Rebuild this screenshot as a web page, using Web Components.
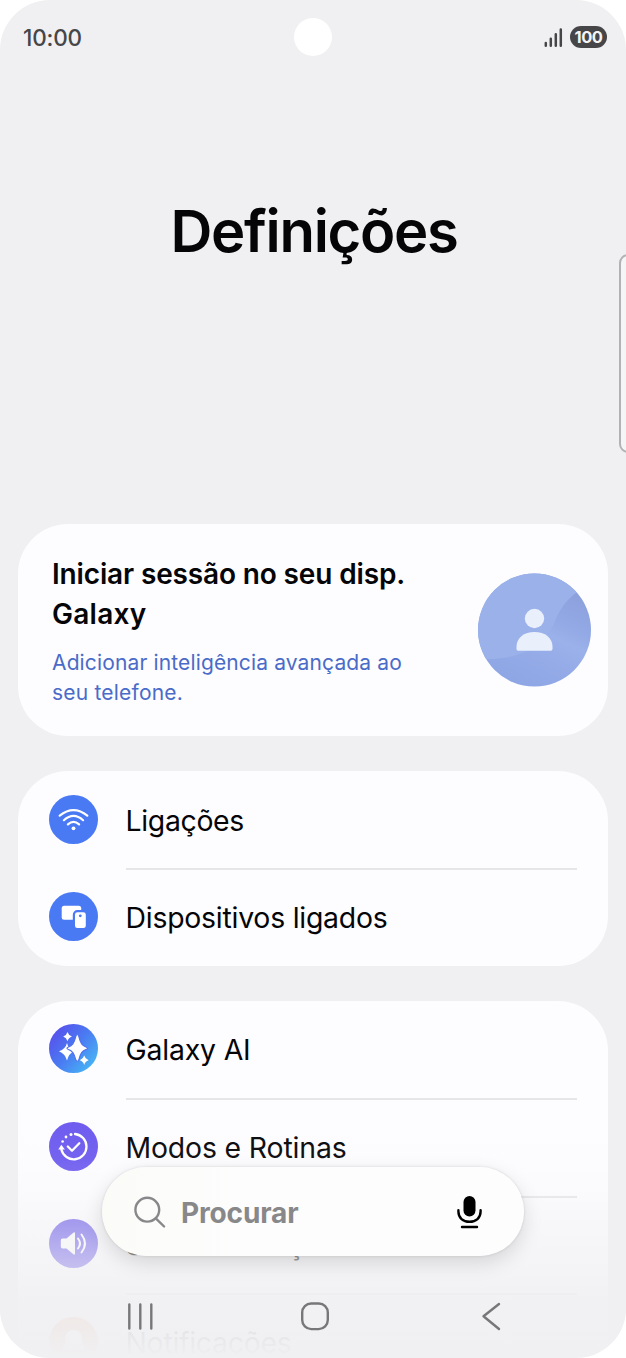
<!DOCTYPE html>
<html lang="pt">
<head>
<meta charset="utf-8">
<title>Definições</title>
<style>
html,body{margin:0;background:#fff;font-family:Inter,Roboto,sans-serif}
</style>
</head>
<body>
<settings-screen></settings-screen>
<script>
function define(name, markup, setup) {
  const tpl = document.createElement('template');
  tpl.innerHTML = markup;
  customElements.define(name, class extends HTMLElement {
    connectedCallback() {
      if (this.shadowRoot) return;
      this.attachShadow({mode: 'open'}).append(tpl.content.cloneNode(true));
      if (setup) setup.call(this, this.shadowRoot);
    }
  });
}

// One line of text, tracked so that its advance equals the "w" attribute.
define('fit-text', `<style>:host{display:block;white-space:nowrap}span{display:inline-block}</style><span><slot></slot></span>`,
function (root) {
  const s = root.querySelector('span'), n = this.textContent.length, w = +this.getAttribute('w');
  s.style.letterSpacing = (w - s.getBoundingClientRect().width) / n + 'px';
});

define('status-bar', `<style>
:host{display:grid;grid-template-columns:1fr 38px 1fr;align-items:center;height:75px;box-sizing:border-box;padding:0 19px 2px 23px;color:#464648}
.cam{width:38px;height:38px;border-radius:50%;background:#fff;margin-left:-2px}
.t{font-size:22.5px;font-weight:550;line-height:30px;padding-top:3px}
.r{display:flex;justify-content:flex-end;align-items:center;gap:7px;padding-top:1px}
.b{width:37px;height:22px;border-radius:11px;background:#464648;color:#f4f4f5;font-size:16.5px;font-weight:650;line-height:22px;display:flex;justify-content:center}
svg{display:block}
</style>
<fit-text class="t" w="59">10:00</fit-text><div class="cam"></div>
<div class="r"><svg width="19" height="22" viewBox="0 0 19 22" stroke="#464648" stroke-width="2.5" stroke-linecap="round"><path d="M1.8 17v2.700M6.800 12.700v7M11.800 8.200v11.500M16.800 3.600v16.100"/></svg>
<div class="b"><fit-text w="28">100</fit-text></div></div>`);

define('page-title', `<style>
:host{display:flex;justify-content:center;height:449px;box-sizing:border-box;padding:116px 0 0 2px;color:#050507;font-size:58px;font-weight:570;line-height:81px}
</style><slot></slot>`);

define('account-card', `<style>
:host{display:flex;justify-content:space-between;box-sizing:border-box;height:212px;margin:0 18px;padding:31px 17px 0 34px;border-radius:50px;background:#fdfdff}
.h{font-size:28px;font-weight:570;line-height:39.5px;color:#050507}
.s{font-size:21px;line-height:30px;color:#4a6bc8;padding-top:14px}
svg{display:block;margin-top:18px}
</style>
<div><div class="h"><fit-text w="353">Iniciar sessão no seu disp.</fit-text><fit-text w="94.500">Galaxy</fit-text></div>
<div class="s"><fit-text w="350">Adicionar inteligência avançada ao</fit-text><fit-text w="131">seu telefone.</fit-text></div></div>
<svg width="113" height="114" viewBox="0 0 113 114">
<defs><clipPath id="c"><circle cx="56.5" cy="57" r="56.5"/></clipPath>
<linearGradient id="g" x1=".3" y1="1" x2=".75" y2="0"><stop offset="0" stop-color="#8ea5e5"/><stop offset=".3" stop-color="#94abe8"/><stop offset=".5" stop-color="#9ab1ea"/><stop offset=".62" stop-color="#93aae6"/><stop offset=".9" stop-color="#8ca0dc"/></linearGradient></defs>
<g clip-path="url(#c)"><path fill="url(#g)" d="M0 0h113v114H0z"/><path fill="#9ab1ea" d="M0 0h113v12Q86 22 76 51Q62 77 38 82Q24 87 0 86z"/></g>
<g fill="#e9effb"><circle cx="56.5" cy="45.5" r="9.7"/><path d="M38.5 76v-2.5C38.5 65 46 59 56.5 59s18 6 18 14.500V76q0 1.700-1.700 1.700H40.200q-1.700 0-1.700-1.700z"/></g></svg>`);

define('settings-group', `<style>
:host{display:block;box-sizing:border-box;margin:35px 18px 0;border-radius:50px;background:#fdfdff}
</style><slot></slot>`);

define('settings-row', `<style>
:host{display:flex;align-items:center;box-sizing:border-box;height:97.400px;padding:0 31px 0 30.500px;gap:28px;color:#050507;font-size:28.400px}
.i{width:49px;height:49px;flex:none;margin-top:-1px}
.l{flex:1;height:100%;display:flex;align-items:center;box-sizing:border-box;padding-top:1px;box-shadow:0 2px #e6e6e9}
:host([last]) .l{box-shadow:none}
</style><div class="i"><slot name="icon"></slot></div><div class="l"><slot></slot></div>`);

const icons = {
  wifi: `<circle cx="24.500" cy="24.500" r="24.500" fill="#4a79f4"/><g fill="none" stroke="#fff" stroke-width="2.200" stroke-linecap="round"><path d="M10.700 20.700Q24.500 9.600 38.300 20.700M14.900 25.200Q24.500 16.600 34.100 25.200M18.900 29.400Q24.500 24.300 30.100 29.400"/></g><circle cx="24.500" cy="33.300" r="1.900" fill="#fff"/>`,
  devices: `<circle cx="24.500" cy="24.500" r="24.500" fill="#4a79f4"/><rect x="12.700" y="13.800" width="19.500" height="14" rx="2.500" fill="#fff"/><rect x="24.900" y="19.200" width="13" height="18" rx="3.500" fill="#fff" stroke="#4a79f4" stroke-width="2.200"/><circle cx="31.300" cy="23.800" r="1.400" fill="#4a79f4"/>`,
  ai: `<defs><linearGradient id="a" x1=".1" y1=".15" x2=".9" y2=".85"><stop offset="0" stop-color="#5752ec"/><stop offset=".5" stop-color="#4a7bf2"/><stop offset="1" stop-color="#47b4f5"/></linearGradient></defs><circle cx="24.500" cy="24.500" r="24.500" fill="url(#a)"/><g fill="#fff"><path d="M18 19Q19.300 25 25 27.300Q19.800 29.500 18 36.500Q15.800 29.500 10 27.300Q16.500 25 18 19z"/><path stroke="#4f70ef" stroke-width="1.100" d="M28.300 10.500Q29.300 10.500 29.800 12.500C31.600 19.500 33 21.500 37.500 23.200Q39.500 24.200 37.500 25.200C33 27 31.600 29 29.800 35.800Q28.300 38.800 26.800 35.800C25 29 23.500 27 19 25.200Q17 24.200 19 23.200C23.500 21.500 25 19.500 26.800 12.500Q27.300 10.500 28.300 10.500z"/><path d="M18.500 8Q19.500 11.500 23 12.600Q19.500 13.700 18.500 17.300Q17.500 13.700 14.200 12.600Q17.500 11.500 18.500 8zM35.200 31.500Q36.200 35 39.600 36.200Q36.200 37.300 35.200 41Q34.200 37.300 30.800 36.200Q34.200 35 35.200 31.500z"/></g>`,
  modes: `<circle cx="24.500" cy="24.500" r="24.500" fill="#6c59ef"/><g fill="none" stroke="#fff" stroke-width="2.300" stroke-linecap="round" stroke-linejoin="round"><path d="M26 12A12.700 12.700 0 1 1 12.400 27.500M18.800 24.500l4.200 4.300 7.300-7.500"/></g><g fill="#fff"><circle cx="22" cy="12.400" r="1.500"/><circle cx="17" cy="15" r="1.400"/><circle cx="13.600" cy="19.500" r="1.300"/><path d="M9.300 27.600L12.300 22.800L15.900 27.400z"/></g>`,
  sound: `<circle cx="24.500" cy="24.500" r="24.500" fill="#6a59ea"/><path fill="#fff" d="M13.500 19.500h4l6.800-5.700q1.700-1.200 1.700.7v20q0 1.900-1.700.7l-6.800-5.700h-4q-1.700 0-1.700-1.700V21.200q0-1.700 1.700-1.700z"/><g fill="none" stroke="#fff" stroke-width="2" stroke-linecap="round"><path d="M29 19.500q4 5 0 10M32.500 15.500q7 9 0 18"/></g>`,
  bell: `<circle cx="24.500" cy="24.500" r="24.500" fill="#f08c64"/><path fill="#fff" d="M24.500 13c-6 0-8.500 4-8.500 9v5l-3 6h23l-3-6v-5c0-5-2.500-9-8.500-9z"/>`
};
customElements.define('row-icon', class extends HTMLElement {
  connectedCallback() {
    if (this.shadowRoot) return;
    this.attachShadow({mode: 'open'}).innerHTML = `<style>:host,svg{display:block;width:49px;height:49px}</style><svg viewBox="0 0 49 49">${icons[this.getAttribute('name')]}</svg>`;
  }
});

define('search-pill', `<style>
:host{display:flex;align-items:center;box-sizing:border-box;width:422px;height:89px;padding:2px 41px 0 31px;border-radius:45px;background:linear-gradient(90deg,#fbfcf8,#fcfcfb 20%,#fdfdfd 36%);box-shadow:0 0 3px rgba(0,0,0,.13),0 7px 20px rgba(0,0,0,.13);color:#88888a;font-size:28px;font-weight:670}
.q{flex:1;margin-left:15px}svg{display:block}
</style>
<svg width="33" height="33" viewBox="0 0 33 33" fill="none" stroke="#88888a" stroke-width="2.400" stroke-linecap="round"><circle cx="14.300" cy="13.700" r="11.900"/><path d="M22.800 22.300l8.300 8.200"/></svg>
<fit-text class="q" w="117.500">Procurar</fit-text>
<svg width="28" height="36" viewBox="0 0 28 36"><rect x="8.500" y="1" width="12" height="20.500" rx="6"/><path fill="none" stroke="#000" stroke-width="2.400" stroke-linecap="round" d="M3.400 15.300v1.200c0 6.300 4.600 10.300 11.100 10.300s11.100-4 11.100-10.300V15.300M7 32h15"/></svg>`);

define('nav-bar', `<style>
:host{display:flex;justify-content:space-between;align-items:center;box-sizing:border-box;height:30px;padding:0 124px 0 125px}svg{display:block}
.h{margin-left:-5px}
</style>
<svg width="30" height="30" viewBox="0 0 30 30" stroke="#77777a" stroke-width="2.400" stroke-linecap="round"><path d="M4.300 3.500v24M15.300 3.500v24M26.300 3.500v24"/></svg>
<svg class="h" width="30" height="30" viewBox="0 0 30 30" fill="none" stroke="#77777a" stroke-width="2.400"><rect x="2.200" y="2.500" width="25.600" height="25.600" rx="9"/></svg>
<svg width="22" height="30" viewBox="0 0 22 30" fill="none" stroke="#77777a" stroke-width="2.400" stroke-linecap="round" stroke-linejoin="round"><path d="M19 3L3.500 15.300L19 28"/></svg>`);

define('settings-screen', `<style>
:host{display:block;position:relative;width:626px;height:1358px;border-radius:50px;overflow:hidden;background:#f0f0f2}
.edge{position:absolute;left:618.500px;top:253.500px;width:30px;height:199px;box-sizing:border-box;border:2px solid #b2b2b4;border-radius:9px;background:#f5f5f6}
.fade{position:absolute;inset:1100px 0 0;background:linear-gradient(rgba(240,240,242,0),rgba(240,240,242,.06) 22%,rgba(240,240,242,.2) 36%,rgba(240,240,242,.43) 47%,rgba(240,240,242,.68) 65%,rgba(240,240,242,.9) 78%,rgba(240,240,242,.97) 93%,#f0f0f2)}
search-pill{position:absolute;left:102px;top:1167px}
nav-bar{position:absolute;left:0;right:0;top:1301px}
</style>
<status-bar></status-bar>
<page-title><fit-text w="287">Definições</fit-text></page-title>
<account-card></account-card>
<settings-group>
<settings-row><row-icon slot="icon" name="wifi"></row-icon><fit-text w="118.500">Ligações</fit-text></settings-row>
<settings-row last><row-icon slot="icon" name="devices"></row-icon><fit-text w="262">Dispositivos ligados</fit-text></settings-row>
</settings-group>
<settings-group>
<settings-row><row-icon slot="icon" name="ai"></row-icon><fit-text w="125">Galaxy AI</fit-text></settings-row>
<settings-row><row-icon slot="icon" name="modes"></row-icon><fit-text w="221">Modos e Rotinas</fit-text></settings-row>
<settings-row><row-icon slot="icon" name="sound"></row-icon><fit-text w="210">Sons e vibração</fit-text></settings-row>
<settings-row last><row-icon slot="icon" name="bell"></row-icon><fit-text w="166">Notificações</fit-text></settings-row>
</settings-group>
<div class="edge"></div><div class="fade"></div>
<search-pill></search-pill><nav-bar></nav-bar>`);
</script>
</body>
</html>
